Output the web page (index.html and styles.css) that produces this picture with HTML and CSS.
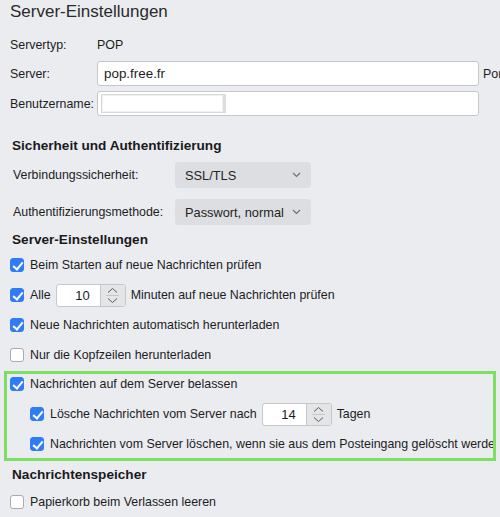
FILE: index.html
```html
<html lang="de">
    <head>
        <meta charset="UTF-8">
        <meta name="viewport" content="width=device-width, initial-scale=1.0">
        <title>Server-Einstellungen</title>
        <link rel="stylesheet" href="styles.css">
    </head>
    <body>
        <div id="page">
            <h1 class="title">Server-Einstellungen</h1>

            <div class="row row-info">
                <label class="lbl">Servertyp:</label>
                <span class="value">POP</span>
            </div>
            <div class="row row-field">
                <label class="lbl">Server:</label>
                <div class="text-input">pop.free.fr</div>
                <span class="port">Port:</span>
            </div>
            <div class="row row-field row-user">
                <label class="lbl">Benutzername:</label>
                <div class="text-input user-input">
                    <span class="user-a"></span>
                    <span class="user-b"></span>
                </div>
            </div>

            <h2 class="heading h-security">Sicherheit und Authentifizierung</h2>
            <div class="row row-select">
                <label class="lbl-wide">Verbindungssicherheit:</label>
                <div class="select">
                    <span>SSL/TLS</span>
                    <svg class="chev" width="9" height="6" viewBox="0 0 9 6"><path d="M1 1l3.5 3.5L8 1" fill="none" stroke="#6b6d70" stroke-width="1.1"/></svg>
                </div>
            </div>
            <div class="row row-select">
                <label class="lbl-wide">Authentifizierungsmethode:</label>
                <div class="select">
                    <span>Passwort, normal</span>
                    <svg class="chev" width="9" height="6" viewBox="0 0 9 6"><path d="M1 1l3.5 3.5L8 1" fill="none" stroke="#6b6d70" stroke-width="1.1"/></svg>
                </div>
            </div>

            <h2 class="heading h-server">Server-Einstellungen</h2>
            <div class="row check-row">
                <span class="cb on"></span>
                <span>Beim Starten auf neue Nachrichten prüfen</span>
            </div>
            <div class="row check-row">
                <span class="cb on"></span>
                <span>Alle</span>
                <div class="spin">
                    <span class="spin-num">10</span>
                    <span class="spin-btns">
                        <svg width="15" height="21" viewBox="0 0 15 21"><path d="M3 7.5l4.5-4 4.5 4" fill="none" stroke="#5a5c60" stroke-width="1"/><path d="M1 10.5h13" stroke="#c4c6ca" stroke-width="1"/><path d="M3 13.5l4.5 4 4.5-4" fill="none" stroke="#5a5c60" stroke-width="1"/></svg>
                    </span>
                </div>
                <span>Minuten auf neue Nachrichten prüfen</span>
            </div>
            <div class="row check-row">
                <span class="cb on"></span>
                <span>Neue Nachrichten automatisch herunterladen</span>
            </div>
            <div class="row check-row">
                <span class="cb"></span>
                <span>Nur die Kopfzeilen herunterladen</span>
            </div>

            <div class="highlight">
                <div class="row check-row hl-first">
                    <span class="cb on"></span>
                    <span>Nachrichten auf dem Server belassen</span>
                </div>
                <div class="row check-row sub">
                    <span class="cb on"></span>
                    <span>Lösche Nachrichten vom Server nach</span>
                    <div class="spin">
                        <span class="spin-num">14</span>
                        <span class="spin-btns">
                            <svg width="15" height="21" viewBox="0 0 15 21"><path d="M3 7.5l4.5-4 4.5 4" fill="none" stroke="#5a5c60" stroke-width="1"/><path d="M1 10.5h13" stroke="#c4c6ca" stroke-width="1"/><path d="M3 13.5l4.5 4 4.5-4" fill="none" stroke="#5a5c60" stroke-width="1"/></svg>
                        </span>
                    </div>
                    <span>Tagen</span>
                </div>
                <div class="row check-row sub">
                    <span class="cb on"></span>
                    <span>Nachrichten vom Server löschen, wenn sie aus dem Posteingang gelöscht werden</span>
                </div>
            </div>

            <h2 class="heading h-store">Nachrichtenspeicher</h2>
            <div class="row check-row last">
                <span class="cb"></span>
                <span>Papierkorb beim Verlassen leeren</span>
            </div>
        </div>
    </body>
</html>
```

FILE: styles.css
```css
* {
    margin: 0;
    padding: 0;
    box-sizing: border-box;
}

body, html {
    height: 100%;
    overflow: hidden;
}

body {
    background: #eaecef;
    color: #1d1d1f;
    font-family: "Liberation Sans", "Noto Sans", sans-serif;
    font-size: 12.4px;
}

#page {
    width: 500px;
    padding-left: 10px;
    overflow: hidden;
}

.row {
    display: flex;
    align-items: center;
    white-space: nowrap;
}

.title {
    font-weight: normal;
    font-size: 17px;
    height: 24px;
    line-height: 24px;
    color: #2a2a2c;
}

.row-info {
    height: 24px;
    margin-top: 9px;
}

.lbl {
    width: 87px;
    flex: none;
}

.row-field {
    height: 25px;
    margin-top: 4px;
}
.row-user {
    margin-top: 5px;
}

.text-input {
    width: 382px;
    height: 25px;
    background: #fff;
    border: 1px solid #c6c7c9;
    border-radius: 3px;
    padding-left: 6px;
    display: flex;
    align-items: center;
    font-size: 13.4px;
    flex: none;
}

.port {
    margin-left: 4px;
}

.user-input {
    padding: 2px 0 2px 3px;
    align-items: stretch;
}
.user-a {
    width: 125px;
    background: #fff;
    border: 1px solid #d9dadc;
    border-right: 3px solid #dcdddf;
    box-shadow: inset 0 0 0 1px #f0f0f1;
}
.user-b {
    flex: 1;
}

.heading {
    font-size: 13.6px;
    font-weight: 600;
    height: 20px;
    line-height: 20px;
    padding-left: 2px;
    color: #1a1a1c;
}
.h-security {
    margin-top: 20px;
}
.h-server {
    margin-top: 5px;
}
.h-store {
    margin-top: 4px;
}

.row-select {
    height: 26px;
    margin-top: 6px;
}
.row-select + .row-select {
    margin-top: 11px;
}
.lbl-wide {
    width: 165px;
    padding-left: 3px;
    flex: none;
}

.select {
    width: 136px;
    height: 26px;
    background: #dcdee1;
    border-radius: 4px;
    display: flex;
    align-items: center;
    justify-content: space-between;
    padding: 0 10px;
    font-size: 12.8px;
    color: #242426;
}

.check-row {
    height: 30px;
}

.cb {
    width: 14px;
    height: 14px;
    border-radius: 3px;
    background: #fff;
    border: 1px solid #a9abae;
    margin-right: 6px;
    flex: none;
    position: relative;
}
.cb.on {
    background: #2f7cf6;
    border-color: #2f7cf6;
}
.cb.on::after {
    content: "";
    position: absolute;
    left: 4px;
    top: 1px;
    width: 4px;
    height: 8px;
    border: solid #fff;
    border-width: 0 2px 2px 0;
    transform: rotate(40deg);
}

.spin {
    display: flex;
    width: 70px;
    height: 23px;
    margin: 0 5px;
    border: 1px solid #c6c7c9;
    border-radius: 3px;
    background: #fff;
    overflow: hidden;
    flex: none;
}
.spin-num {
    flex: 1;
    text-align: right;
    padding-right: 10px;
    line-height: 21px;
    font-size: 13px;
}
.spin-btns {
    width: 25px;
    background: #e4e5e7;
    border-left: 1px solid #c6c7c9;
    display: flex;
    justify-content: center;
}

.highlight {
    margin-left: -6px;
    width: 492px;
    border: 3px solid #7ee062;
    padding-left: 3px;
    margin-top: 1px;
    overflow: hidden;
}
.hl-first {
    height: 20px;
}
.sub {
    padding-left: 20px;
    height: 28px;
}
.hl-first + .sub {
    margin-top: 6px;
}
.sub + .sub {
    margin-top: 2px;
}

.last {
    height: 24px;
    margin-top: 5px;
}
```
